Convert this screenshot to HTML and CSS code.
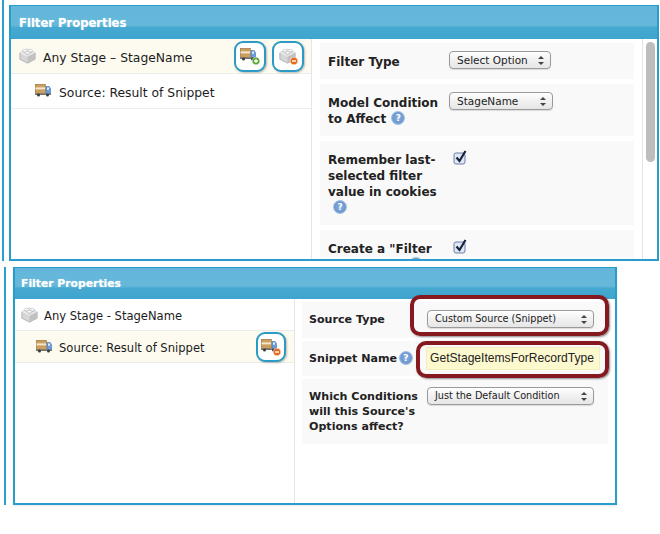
FILE: index.html
```html
<!DOCTYPE html>
<html lang="en">
<head>
<meta charset="utf-8">
<title>Filter Properties</title>
<link rel="stylesheet" href="styles.css">
</head>
<body>
<svg class="defs" width="0" height="0" aria-hidden="true">
  <defs>
    <symbol id="brick" viewBox="0 0 16 16">
      <path d="M.8 5.5v6L8 15.2l7.2-3.7v-6L8 2z" fill="#d6d6d6" stroke="#a6a6a6" stroke-width=".7"/>
      <path d="M.8 5.5 8 9.2l7.2-3.7L8 2z" fill="#efefef"/>
      <path d="M8 9.2v6l7.2-3.7v-6z" fill="#c2c2c2"/>
      <path d="M3.2 3.4v1.5c0 .8 1 1.3 2.2 1.3s2.2-.5 2.2-1.3V3.4z" fill="#dcdcdc"/>
      <ellipse cx="5.4" cy="3.4" rx="2.2" ry="1.2" fill="#fbfbfb" stroke="#b5b5b5" stroke-width=".5"/>
      <path d="M8.4 3.4v1.5c0 .8 1 1.3 2.2 1.3s2.2-.5 2.2-1.3V3.4z" fill="#d2d2d2"/>
      <ellipse cx="10.6" cy="3.4" rx="2.2" ry="1.2" fill="#fbfbfb" stroke="#b5b5b5" stroke-width=".5"/>
      <path d="M5.8 5.4v1.5c0 .8 1 1.3 2.2 1.3s2.2-.5 2.2-1.3V5.4z" fill="#d8d8d8"/>
      <ellipse cx="8" cy="5.4" rx="2.2" ry="1.2" fill="#fbfbfb" stroke="#b5b5b5" stroke-width=".5"/>
    </symbol>
    <symbol id="truck" viewBox="0 0 16 13">
      <rect x=".3" y=".3" width="10.2" height="9.2" fill="#cd9f5e" stroke="#8f7445" stroke-width=".6"/>
      <rect x=".6" y="3.4" width="9.6" height="2" fill="#f3e7cf"/>
      <path d="M11 2.5h3.2l1.5 2.4v4.6H11z" fill="#6a9ddd" stroke="#3b6398" stroke-width=".5"/>
      <rect x="12" y="3.5" width="2" height="2.2" fill="#e3edf9"/>
      <rect x="0" y="9.5" width="16" height="1.4" fill="#666"/>
      <circle cx="3.5" cy="11" r="1.5" fill="#3a3a3a"/>
      <circle cx="12.5" cy="11" r="1.5" fill="#3a3a3a"/>
    </symbol>
    <symbol id="badge-add" viewBox="0 0 8 8">
      <circle cx="4" cy="4" r="3.8" fill="#55a32f" stroke="#fff" stroke-width=".5"/>
      <path d="M4 2v4M2 4h4" stroke="#fff" stroke-width="1.3"/>
    </symbol>
    <symbol id="badge-remove" viewBox="0 0 8 8">
      <circle cx="4" cy="4" r="3.8" fill="#e4681c" stroke="#fff" stroke-width=".5"/>
      <path d="M2 4h4" stroke="#fff" stroke-width="1.4"/>
    </symbol>
  </defs>
</svg>

<div class="shot shot-upper">
  <div class="stripe"></div>
  <section class="panel panel-upper">
    <header class="panel-head">Filter Properties</header>
    <div class="panel-body">
      <div class="tree">
        <div class="tree-row is-active">
          <svg class="ico-brick"><use href="#brick"/></svg>
          <span class="tree-text">Any Stage – StageName</span>
          <div class="actions">
            <button class="action" type="button">
              <span class="combo"><svg class="ico-truck"><use href="#truck"/></svg><svg class="ico-badge"><use href="#badge-add"/></svg></span>
            </button>
            <button class="action" type="button">
              <span class="combo"><svg class="ico-brick"><use href="#brick"/></svg><svg class="ico-badge"><use href="#badge-remove"/></svg></span>
            </button>
          </div>
        </div>
        <div class="tree-row tree-child">
          <svg class="ico-truck"><use href="#truck"/></svg>
          <span class="tree-text">Source: Result of Snippet</span>
        </div>
      </div>
      <div class="pane">
        <div class="fields">
          <div class="field">
            <div class="label">Filter Type</div>
            <div class="select sel-type">Select Option<span class="arrows"></span></div>
          </div>
          <div class="field">
            <div class="label">Model Condition<br>to Affect <span class="help">?</span></div>
            <div class="select sel-cond">StageName<span class="arrows"></span></div>
          </div>
          <div class="field">
            <div class="label">Remember last-<br>selected filter<br>value in cookies<br><span class="help help-own">?</span></div>
            <svg class="check" viewBox="0 0 14 15"><rect x="1" y="3" width="11" height="11" rx="2" fill="#dfe6f5" stroke="#6f7fa8"/><path d="M3.5 7.5l3 3.5L12.5 1" fill="none" stroke="#16233f" stroke-width="2.2"/></svg>
          </div>
          <div class="field">
            <div class="label">Create a "Filter<br><span class="help help-far">?</span></div>
            <svg class="check" viewBox="0 0 14 15"><rect x="1" y="3" width="11" height="11" rx="2" fill="#dfe6f5" stroke="#6f7fa8"/><path d="M3.5 7.5l3 3.5L12.5 1" fill="none" stroke="#16233f" stroke-width="2.2"/></svg>
          </div>
        </div>
        <div class="scroll"><div class="thumb"></div></div>
      </div>
    </div>
  </section>
</div>

<div class="shot shot-lower">
  <div class="stripe"></div>
  <section class="panel panel-lower">
    <header class="panel-head">Filter Properties</header>
    <div class="panel-body">
      <div class="tree">
        <div class="tree-row">
          <svg class="ico-brick"><use href="#brick"/></svg>
          <span class="tree-text">Any Stage - StageName</span>
        </div>
        <div class="tree-row tree-child is-active">
          <svg class="ico-truck"><use href="#truck"/></svg>
          <span class="tree-text">Source: Result of Snippet</span>
          <div class="actions">
            <button class="action" type="button">
              <span class="combo"><svg class="ico-truck"><use href="#truck"/></svg><svg class="ico-badge"><use href="#badge-remove"/></svg></span>
            </button>
          </div>
        </div>
      </div>
      <div class="pane">
        <div class="fields">
          <div class="field">
            <div class="label">Source Type</div>
            <div class="select sel-wide">Custom Source (Snippet)<span class="arrows"></span></div>
          </div>
          <div class="field field-input">
            <div class="label">Snippet Name <span class="help">?</span></div>
            <div class="text-input">GetStageItemsForRecordType</div>
          </div>
          <div class="field">
            <div class="label">Which Conditions<br>will this Source's<br>Options affect?</div>
            <div class="select sel-wide">Just the Default Condition<span class="arrows"></span></div>
          </div>
        </div>
      </div>
    </div>
    <div class="mark mark-select"></div>
    <div class="mark mark-input"></div>
  </section>
</div>
</body>
</html>
```
FILE: styles.css
```css
* { box-sizing: border-box; }
html, body { margin: 0; padding: 0; background: #fff; }
body {
  width: 660px;
  height: 534px;
  overflow: hidden;
  font-family: "DejaVu Sans", sans-serif;
  color: #1c1c1c;
}
.defs { position: absolute; }

.shot { display: flex; align-items: stretch; }
.shot-upper { height: 261px; padding-left: 2px; gap: 5px; }
.shot-lower { height: 238px; margin-top: 6px; padding-left: 4px; gap: 7px; }

.stripe { width: 2px; background: #2b9fcd; }

.panel {
  display: flex;
  flex-direction: column;
  border: 2px solid #2a9ccb;
  border-top-width: 1px;
  overflow: hidden;
  position: relative;
  background: #fff;
}
.panel-upper { width: 650px; margin-top: 5px; }
.panel-lower { width: 604px; box-shadow: 0 1px 2px #e6e6e6; }

.panel-head {
  height: 33px;
  flex: none;
  padding: 9px 0 0 8px;
  color: #fff;
  font-size: 11.6px;
  font-weight: bold;
  line-height: 16px;
  text-shadow: 0 0 1px rgba(255,255,255,.5);
  background: linear-gradient(#64b7da 0, #65b8da 58%, #45a8d0 66%, #3fa5ce 100%);
}
.panel-lower .panel-head { height: 31px; padding: 8px 0 0 6px; font-size: 10.8px; }

.panel-body { flex: 1; display: flex; min-height: 0; }

.tree { flex: none; width: 301px; border-right: 1px solid #e5e5e5; }
.panel-lower .tree { width: 280px; }

.tree-row {
  height: 35px;
  display: flex;
  align-items: center;
  padding-left: 8px;
  border-bottom: 1px solid #ececec;
  font-size: 12.35px;
}
.panel-lower .tree-row { height: 32px; padding-left: 6px; font-size: 11.55px; }
.is-active { background: #fdfbf0; }
.tree-child { padding-left: 24px; }
.panel-lower .tree-child { padding-left: 21px; }

.ico-brick { width: 17px; height: 17px; flex: none; margin-top: -1px; }
.ico-truck { width: 16px; height: 13px; flex: none; margin-top: -1px; }
.tree-text { margin-left: 7px; padding-top: 3px; white-space: nowrap; }
.tree-child .tree-text { margin-left: 8px; }
.panel-lower .tree-text { margin-left: 6px; padding-top: 2px; }
.panel-lower .tree-child .tree-text { margin-left: 7px; }

.actions { margin-left: auto; display: flex; gap: 6px; padding-right: 7px; }
.panel-lower .actions { padding-right: 8px; }
.action {
  width: 32px;
  height: 31px;
  padding: 0;
  display: flex;
  align-items: center;
  justify-content: center;
  background: #fff;
  border: 2.5px solid #2b9ac6;
  border-radius: 9px;
  box-shadow: 1px 1px 2px rgba(0,0,0,.25);
}
.panel-lower .action { width: 30px; height: 30px; }
.combo { position: relative; display: block; width: 20px; height: 18px; }
.combo .ico-truck { position: absolute; left: 0; top: 1px; margin: 0; }
.combo .ico-brick { position: absolute; left: 1px; top: 0; margin: 0; }
.ico-badge { position: absolute; right: 0; bottom: 0; width: 8px; height: 8px; }

.pane { flex: 1; display: flex; min-width: 0; }
.fields {
  flex: 1;
  min-width: 0;
  display: flex;
  flex-direction: column;
  gap: 5px;
  padding: 4px 8px;
  overflow: hidden;
}
.panel-lower .fields { gap: 3px; padding: 3px 7px; }

.field {
  flex: none;
  display: grid;
  grid-template-columns: 121px 1fr;
  align-items: start;
  padding: 10px 0 10px 8px;
  background: #f9f9f9;
}
.panel-lower .field { grid-template-columns: 118px 1fr; padding-left: 7px; }

.label {
  margin: 1px 0 -1px;
  font-size: 12px;
  font-weight: bold;
  line-height: 16px;
  white-space: nowrap;
  color: #222;
}
.panel-lower .label { margin: 0; font-size: 11.1px; line-height: 15px; }

.select {
  position: relative;
  margin-top: -2px;
  height: 18px;
  padding: 0 0 0 7px;
  font-size: 10.5px;
  line-height: 16px;
  white-space: nowrap;
  color: #222;
  background: linear-gradient(#fff, #f1f1f1 50%, #e6e6e6);
  border: 1px solid #9a9a9a;
  border-radius: 4px;
  box-shadow: 0 1px 1px rgba(0,0,0,.12);
}
.panel-lower .select { font-size: 9.7px; line-height: 15px; }
.sel-type { width: 102px; }
.sel-cond { width: 104px; }
.sel-wide { width: 167px; }
.arrows { position: absolute; right: 6px; top: 4px; width: 6px; height: 9px; }
.arrows::before, .arrows::after {
  content: "";
  position: absolute;
  left: 0;
  border-left: 3px solid transparent;
  border-right: 3px solid transparent;
}
.arrows::before { top: 0; border-bottom: 3px solid #444; }
.arrows::after { bottom: 0; border-top: 3px solid #444; }

.help {
  display: inline-block;
  width: 14px;
  height: 14px;
  margin-left: 1px;
  vertical-align: top;
  border-radius: 50%;
  border: 1px solid #9dbde2;
  background: radial-gradient(circle, #8eb0de 0, #6d97cf 60%, #b9d0ec 100%);
  color: #fff;
  font-size: 9px;
  font-weight: bold;
  line-height: 12px;
  text-align: center;
}
.help-own { margin-left: 5px; }
.help-far { margin-left: 81px; }
.panel-lower .help { margin-left: -2px; }

.check { display: block; width: 14px; height: 15px; margin: -1px 0 0 4px; }

.text-input {
  margin: -4px 0 -4px -1px;
  width: 174px;
  height: 23px;
  padding: 0 0 0 3px;
  font-family: "Liberation Sans", sans-serif;
  font-size: 12.1px;
  line-height: 21px;
  white-space: nowrap;
  color: #222;
  background: #fdf9cf;
  border: 1px solid #f1eebb;
}

.scroll {
  flex: none;
  width: 15px;
  padding: 3px 2px 0 3px;
  border-left: 1px solid #e3e3e3;
}
.thumb { width: 9px; height: 120px; border-radius: 5px; background: #bdbdbd; }

.mark {
  position: absolute;
  border: 4px solid #841a20;
  border-radius: 10px;
  box-shadow: 1px 1px 2px rgba(0,0,0,.45);
}
.mark-select { left: 395px; top: 27px; width: 199px; height: 41px; }
.mark-input { left: 401px; top: 73px; width: 193px; height: 37px; }
```
